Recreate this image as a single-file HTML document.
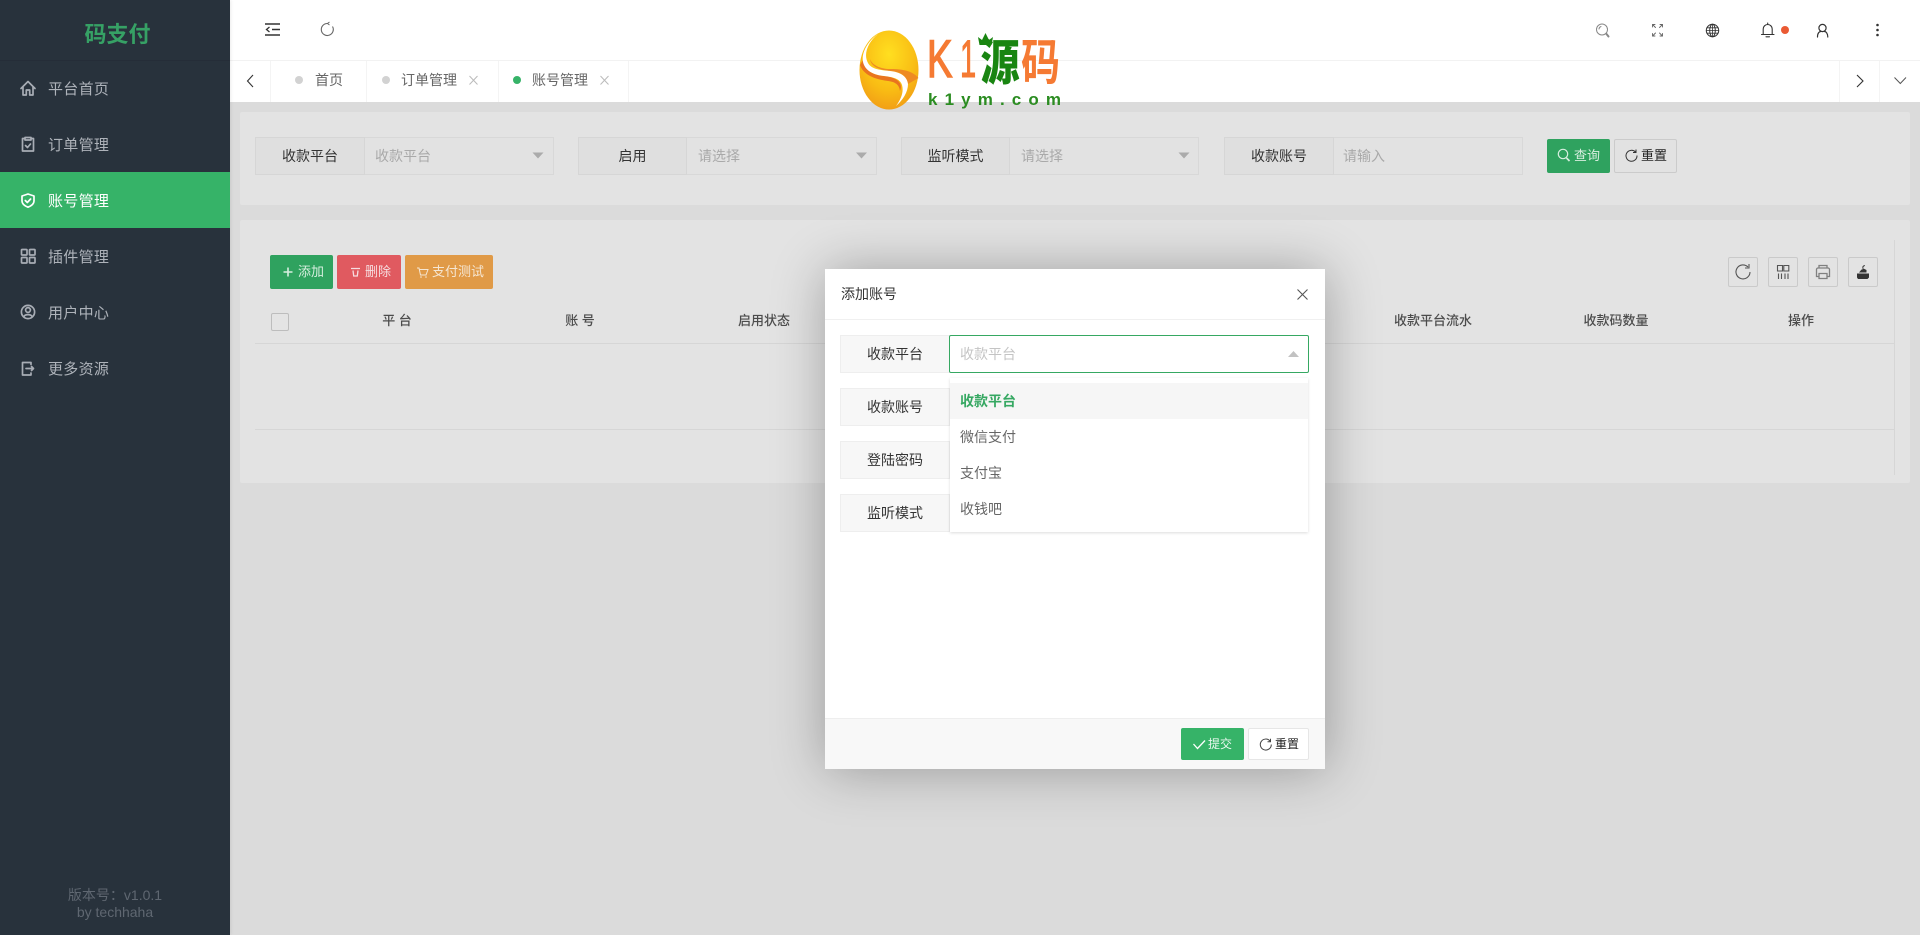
<!DOCTYPE html>
<html lang="zh-CN"><head><meta charset="utf-8"><title>码支付</title>
<style>
html,body{margin:0;padding:0;width:1920px;height:935px;overflow:hidden;background:#dcdcdc;font-family:"Liberation Sans","Noto Sans CJK SC",sans-serif}
.b{position:absolute;box-sizing:border-box}
.t{position:absolute;white-space:nowrap;height:20px;line-height:20px;font-size:14px}
.c{text-align:center}
svg{position:absolute;left:0;top:0;z-index:50;pointer-events:none}
.side{color:#aeb3ba;font-size:15px;letter-spacing:.3px;z-index:5;left:48px}
.lbl{background:#dfdfdf;border:1px solid #d6d6d6;color:#333;display:flex;align-items:center;justify-content:center;font-size:14px;height:38px}
.inp{border:1px solid #d8d8d8;border-left:0;height:38px;background:#e2e2e2}
.ph{color:#a9a9a9}
.th{color:#4c4c4c;font-weight:500;width:200px;text-align:center;font-size:13px}
.tb{border:1px solid #cacaca;border-radius:2px;width:30px;height:30px;top:257px}
.ml{background:#f7f7f7;border:1px solid #eee;color:#333;width:110px;height:38px;left:840px;display:flex;align-items:center;justify-content:center;font-size:14px}
</style></head><body>

<!-- content bg -->
<div class="b" style="left:230px;top:102px;width:1690px;height:833px;background:#dbdbdb"></div>
<div class="b" style="left:240px;top:112px;width:1670px;height:93px;background:#e3e3e3;border-radius:2px"></div>
<div class="b" style="left:240px;top:220px;width:1670px;height:263px;background:#e3e3e3;border-radius:2px"></div>

<!-- search row -->
<div class="b lbl" style="left:255px;top:137px;width:110px">收款平台</div>
<div class="b inp" style="left:365px;top:137px;width:189px"></div>
<div class="t ph" style="left:375px;top:146px">收款平台</div>
<div class="b lbl" style="left:578px;top:137px;width:109px">启用</div>
<div class="b inp" style="left:687px;top:137px;width:190px"></div>
<div class="t ph" style="left:698px;top:146px">请选择</div>
<div class="b lbl" style="left:901px;top:137px;width:109px">监听模式</div>
<div class="b inp" style="left:1010px;top:137px;width:189px"></div>
<div class="t ph" style="left:1021px;top:146px">请选择</div>
<div class="b lbl" style="left:1224px;top:137px;width:110px">收款账号</div>
<div class="b inp" style="left:1334px;top:137px;width:189px"></div>
<div class="t ph" style="left:1343px;top:146px">请输入</div>
<div class="b" style="left:1547px;top:139px;width:63px;height:34px;background:#2fa25f;border-radius:2px"></div>
<div class="t" style="left:1574px;top:146px;font-size:13px;color:#d7eedf">查询</div>
<div class="b" style="left:1614px;top:139px;width:63px;height:34px;background:#e2e2e2;border:1px solid #cbcbcb;border-radius:2px"></div>
<div class="t" style="left:1641px;top:146px;font-size:13px;color:#222">重置</div>

<!-- toolbar -->
<div class="b" style="left:270px;top:255px;width:63px;height:34px;background:#2fa25f;border-radius:2px"></div>
<div class="t" style="left:298px;top:262px;font-size:13px;color:#d7eedf">添加</div>
<div class="b" style="left:337px;top:255px;width:64px;height:34px;background:#e05a60;border-radius:2px"></div>
<div class="t" style="left:365px;top:262px;font-size:13px;color:#f6dde0">删除</div>
<div class="b" style="left:405px;top:255px;width:88px;height:34px;background:#e09a47;border-radius:2px"></div>
<div class="t" style="left:432px;top:262px;font-size:13px;color:#f5e6d2">支付测试</div>
<div class="b tb" style="left:1728px"></div><div class="b tb" style="left:1768px"></div><div class="b tb" style="left:1808px"></div><div class="b tb" style="left:1848px"></div>

<!-- table -->
<div class="b" style="left:271px;top:313px;width:18px;height:18px;border:1px solid #bdbdbd;border-radius:2px;background:#e4e4e4"></div>
<div class="t th" style="left:297px;top:311px">平 台</div>
<div class="t th" style="left:480px;top:311px">账 号</div>
<div class="t th" style="left:664px;top:311px">启用状态</div>
<div class="t th" style="left:1333px;top:311px">收款平台流水</div>
<div class="t th" style="left:1516px;top:311px">收款码数量</div>
<div class="t th" style="left:1701px;top:311px">操作</div>
<div class="b" style="left:255px;top:343px;width:1640px;height:1px;background:#d6d6d6"></div>
<div class="b" style="left:255px;top:429px;width:1640px;height:1px;background:#d6d6d6"></div>
<div class="b" style="left:1894px;top:240px;width:1px;height:235px;background:#d6d6d6"></div>

<!-- sidebar -->
<div class="b" style="left:0;top:0;width:230px;height:935px;background:#28323c;z-index:4;box-shadow:1px 0 3px rgba(0,0,0,.08)"></div>
<div class="b" style="left:0;top:60px;width:230px;height:1px;background:#252d38;z-index:5"></div>
<div class="t c" style="left:0;top:25px;width:235px;font-size:22px;font-weight:700;color:#36a165;z-index:5">码支付</div>
<div class="b" style="left:0;top:172px;width:230px;height:56px;background:#36b368;z-index:5"></div>
<div class="t side" style="top:80px">平台首页</div>
<div class="t side" style="top:136px">订单管理</div>
<div class="t side" style="top:192px;color:#fff">账号管理</div>
<div class="t side" style="top:248px">插件管理</div>
<div class="t side" style="top:304px">用户中心</div>
<div class="t side" style="top:360px">更多资源</div>
<div class="t c" style="left:0;top:885px;width:230px;color:#5f6771;z-index:5">版本号：v1.0.1</div>
<div class="t c" style="left:0;top:902px;width:230px;color:#5f6771;z-index:5">by techhaha</div>

<!-- header -->
<div class="b" style="left:230px;top:0;width:1690px;height:102px;background:#fff"></div>
<div class="b" style="left:230px;top:60px;width:1690px;height:1px;background:#f2f2f2"></div>
<div class="b" style="left:270px;top:61px;width:1px;height:41px;background:#f4f4f4"></div>
<div class="b" style="left:366px;top:61px;width:1px;height:41px;background:#f4f4f4"></div>
<div class="b" style="left:498px;top:61px;width:1px;height:41px;background:#f4f4f4"></div>
<div class="b" style="left:628px;top:61px;width:1px;height:41px;background:#f4f4f4"></div>
<div class="b" style="left:1839px;top:61px;width:1px;height:41px;background:#f4f4f4"></div>
<div class="b" style="left:1879px;top:61px;width:1px;height:41px;background:#f4f4f4"></div>
<div class="t" style="left:315px;top:70px;color:#666">首页</div>
<div class="t" style="left:401px;top:70px;color:#666">订单管理</div>
<div class="t" style="left:532px;top:70px;color:#666">账号管理</div>

<!-- modal -->
<div class="b" style="left:825px;top:269px;width:500px;height:500px;background:#fff;box-shadow:1px 1px 50px rgba(0,0,0,.3);z-index:10">
</div>
<div class="b" style="left:825px;top:319px;width:500px;height:1px;background:#f0f0f0;z-index:11"></div>
<div class="t" style="left:841px;top:284px;color:#333;z-index:11">添加账号</div>
<div class="b ml" style="top:335px;z-index:11">收款平台</div>
<div class="b ml" style="top:388px;z-index:11">收款账号</div>
<div class="b ml" style="top:441px;z-index:11">登陆密码</div>
<div class="b ml" style="top:494px;z-index:11">监听模式</div>
<div class="b" style="left:949px;top:335px;width:360px;height:38px;background:#fff;border:1px solid #36a862;border-radius:2px;z-index:12"></div>
<div class="t" style="left:960px;top:344px;color:#c4c4c4;z-index:12">收款平台</div>
<div class="b" style="left:950px;top:378px;width:358px;height:154px;background:#fff;box-shadow:0 1px 3px rgba(0,0,0,.14);z-index:12"></div>
<div class="b" style="left:950px;top:383px;width:358px;height:36px;background:#f6f6f6;z-index:13"></div>
<div class="t" style="left:960px;top:391px;color:#36a862;font-weight:700;z-index:14">收款平台</div>
<div class="t" style="left:960px;top:427px;color:#666;z-index:14">微信支付</div>
<div class="t" style="left:960px;top:463px;color:#666;z-index:14">支付宝</div>
<div class="t" style="left:960px;top:499px;color:#666;z-index:14">收钱吧</div>
<div class="b" style="left:825px;top:718px;width:500px;height:51px;background:#f8f8f8;border-top:1px solid #eee;z-index:11"></div>
<div class="b" style="left:1181px;top:728px;width:63px;height:32px;background:#36b368;border-radius:2px;z-index:12"></div>
<div class="t" style="left:1208px;top:734px;font-size:12px;color:#eaf7ef;z-index:13">提交</div>
<div class="b" style="left:1248px;top:728px;width:61px;height:32px;background:#fff;border:1px solid #e6e6e6;border-radius:2px;z-index:12"></div>
<div class="t" style="left:1275px;top:734px;font-size:12px;color:#222;z-index:13">重置</div>

<svg width="1920" height="935" viewBox="0 0 1920 935" fill="none">
<defs>
<radialGradient id="egg" cx="50%" cy="30%" r="75%"><stop offset="0" stop-color="#ffdf20"/><stop offset=".6" stop-color="#f9bd14"/><stop offset="1" stop-color="#f19a16"/></radialGradient>
</defs>
<!-- sidebar icons -->
<g stroke="#a8adb5" stroke-width="1.700" stroke-linejoin="round" stroke-linecap="round">
<path d="M21 88.500l7-7 7 7M23 86.500v8.500h3.300v-5h3.400v5H33v-8.500"/>
<path d="M25 138.500h-2.500v12.500h11v-12.500H31M25 137.500h6v2.500h-6zM25.500 145.500l2 2 3-3.500"/>
<path stroke="#fff" d="M28 194l6 2v5c0 2.500-2.500 4.800-6 6.200-3.500-1.400-6-3.700-6-6.200v-5zM25.300 200.500l2 2 3.300-3.500"/>
<rect x="21.500" y="249.500" width="5.500" height="5.500" rx=".8"/><rect x="29.500" y="249.500" width="5.500" height="5.500" rx=".8"/><rect x="21.500" y="257.500" width="5.500" height="5.500" rx=".8"/><rect x="29.500" y="257.500" width="5.500" height="5.500" rx=".8"/>
<circle cx="28" cy="312" r="6.600"/><circle cx="28" cy="310" r="2.400"/><path d="M24 316.500c1-2.500 7-2.500 8 0"/>
<path d="M31 364.500v-2h-8.500v12.500H31v-2M26 368.500h7.500M31.500 366.500l2 2-2 2"/>
</g>
<!-- header icons -->
<g stroke="#333" stroke-width="1.300">
<path stroke-width="1.600" d="M265 24h15M265 35h15M272 29.500h8"/><path stroke-width="1.300" d="M269.500 27l-3 2.500 3 2.500"/>
</g>
<path stroke="#666" stroke-width="1.100" d="M327.500 23.500a6 6 0 1 0 5 3"/><path stroke="#666" stroke-width="1" d="M329.500 22l-2 1.500 2 1.500"/>
<g stroke="#666" stroke-width="1" stroke-linecap="round">
<circle cx="1602" cy="29.500" r="5.500" stroke="#888"/><path stroke="#888" d="M1599 29a3 3 0 0 1 2-2.500"/><path stroke-width="2" stroke="#888" d="M1606.500 34l2 2.500"/>
<path d="M1652.500 27v-2.500H1655M1662.500 27v-2.500H1660M1652.500 33.500v2.500H1655M1662.500 33.500v2.500H1660M1653 25l2.500 2.500M1662 25l-2.500 2.500M1653 35.500l2.500-2.500M1662 35.500l-2.500-2.500" stroke-width=".9"/>
<g stroke="#333"><circle cx="1712.500" cy="30.500" r="6.200"/><ellipse cx="1712.500" cy="30.500" rx="2.800" ry="6.200"/><path d="M1706.300 30.500h12.400M1707 27.800h11M1707 33.200h11M1712.500 24.300v12.400" stroke-width=".8"/></g>
<path stroke="#333" stroke-width="1.100" d="M1761.500 34.500h12.500M1763.200 34.500v-5.500a4.500 4.500 0 0 1 9 0v5.500M1766 36.800h3.500M1767.700 23v1.500"/>
<circle cx="1822.500" cy="28" r="3.600" stroke="#333" stroke-width="1.200"/><path stroke="#333" stroke-width="1.200" d="M1817.500 37c0-4 1.800-5.500 3.300-5.500M1827.800 37c0-3.500-1.800-5.500-3.300-5.500"/>
</g>
<circle cx="1785" cy="30" r="4" fill="#ea5a33"/>
<circle cx="1877.500" cy="25" r="1.300" fill="#333"/><circle cx="1877.500" cy="30" r="1.300" fill="#333"/><circle cx="1877.500" cy="35" r="1.300" fill="#333"/>
<!-- tabs -->
<path d="M253 75l-5.500 6 5.500 6M1857 75l6 6-6 6" stroke="#333" stroke-width="1.100"/>
<path d="M1894.500 77.500l5.800 6 5.700-6" stroke="#555" stroke-width="1"/>
<circle cx="299" cy="80" r="4" fill="#d2d2d2"/><circle cx="386" cy="80" r="4" fill="#d2d2d2"/><circle cx="517" cy="80" r="4" fill="#36b368"/>
<path d="M469.500 76l8 8.500M477.500 76l-8 8.500M600.500 76l8 8.500M608.500 76l-8 8.500" stroke="#bbb" stroke-width="1"/>
<!-- select arrows -->
<path d="M532.500 152.500h11l-5.500 6zM856 152.500h11l-5.500 6zM1178.500 152.500h11l-5.500 6z" fill="#ababab"/>
<path d="M1288 357l5.500-6 5.500 6z" fill="#c2c2c2"/>
<!-- button icons -->
<g stroke="#d7eedf" stroke-width="1.200">
<circle cx="1563" cy="154" r="4.700"/><path stroke-width="1.700" d="M1566.500 158l3 3"/>
<path stroke-width="1.600" d="M283.500 272h9M288 267.500v9"/>
</g>
<path d="M1635.500 152a5.500 5.500 0 1 0 1.500 3.500M1636 149.500v3h-3" stroke="#333" stroke-width="1"/>
<path d="M351 268.500h9M353 270.500l.7 5.500h3.600l.7-5.500" stroke="#f6dde0" stroke-width="1.300"/>
<path d="M417 268h2l1.500 7h5.500l2-5.500h-9" stroke="#f5e6d2" stroke-width="1"/><circle cx="421" cy="277" r=".8" fill="#f5e6d2"/><circle cx="426" cy="277" r=".8" fill="#f5e6d2"/>
<path d="M1193.500 744l4 4.500 7.500-8" stroke="#fff" stroke-width="1.300"/>
<path d="M1270 741a5.500 5.500 0 1 0 1.300 3.500M1270.500 738.800v3h-3" stroke="#444" stroke-width="1"/>
<!-- modal close -->
<path d="M1297.500 289.500l10 10M1307.500 289.500l-10 10" stroke="#555" stroke-width="1.100"/>
<!-- table tools -->
<g stroke="#555" stroke-width="1.100">
<path d="M1748 267a7 7 0 1 0 2 5M1749 264v4h-4"/>
<path d="M1777.500 265.500h5v5.500h-5zM1783.800 265.500h5v5.500h-5zM1778.500 273.500v5.500M1781.500 273.500v5.500M1785 273.500v5.500M1788 273.500v5.500"/>
<path stroke="#808080" stroke-width="1.300" d="M1819 268v-2.500h8v2.500M1819 276.500h-2.500v-7a1.500 1.500 0 0 1 1.500-1.500h10a1.500 1.500 0 0 1 1.500 1.500v7h-2.500M1819 273.500h8v5h-8z"/>
</g>
<path d="M1857 273.500h12v4l-1.500 1.500h-9.500l-1-1.500z" fill="#333"/><path d="M1859 272.500l2.500-3h1v-1.500l4 2v2.500z" fill="#333"/><path d="M1863 268c-.5-1 0-2 1.800-2.500" stroke="#333"/>
<!-- logo watermark -->
<ellipse cx="889" cy="70" rx="29.500" ry="39.500" fill="url(#egg)"/>
<path d="M860 65C864 77 880 80 888 81 895 82 899 84 900 91 904 82 895 77 884 76 874 75 866 72 863 60Z" fill="#e9741f"/>
<path d="M918.500 78C912 70 900 69 890 69 880 69 872 65 870 59 871 67 880 70 890 71 900 72 906 75 908 84Z" fill="#ee8a22"/>
<path d="M878 34C868 42 863 54 868 63 872 70 882 70 890 71 900 72 907 76 908 84 908 92 903 100 896 106 901 99 904 92 902 85 900 78 892 77 884 76 874 75 865 71 863 62 861 52 869 40 878 34Z" fill="#fff"/>
<text transform="translate(927 77) scale(.72 1)" font-family="Liberation Sans" font-size="53" fill="#f57a33" stroke="#f57a33" stroke-width="1.500">K</text>
<text transform="translate(960 77) scale(.55 1)" font-family="Liberation Sans" font-size="53" fill="#f57a33" stroke="#f57a33" stroke-width="1">1</text>
<text transform="translate(980.500 79.500) scale(.93 1.160)" font-family="Noto Sans CJK SC" font-weight="900" font-size="42" fill="#198511">源</text>
<text transform="translate(1021 79.500) scale(.93 1.160)" font-family="Noto Sans CJK SC" font-weight="700" font-size="42" fill="#f57a33">码</text>
<path d="M979.500 45l-1.500-8 4 3 3.500-7 3.500 7 4-3-1.500 8z" fill="#198511"/>
<text x="928" y="105" font-family="Liberation Sans" font-weight="700" font-size="17" fill="#2b8c21" textLength="133" lengthAdjust="spacing">k1ym.com</text>
</svg>
</body></html>
